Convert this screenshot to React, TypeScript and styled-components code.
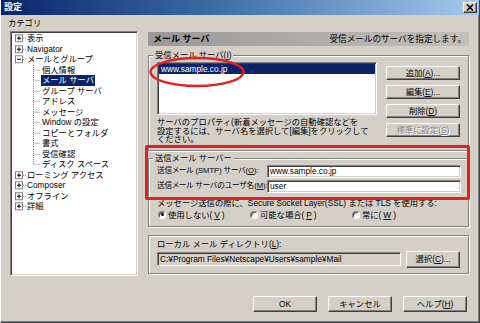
import React from 'react';
import styled, { createGlobalStyle } from 'styled-components';

const GlobalStyle = createGlobalStyle`
  html, body { margin: 0; padding: 0; background: #d4d0c8; }
  body {
    font-family: "Liberation Sans", "Noto Sans CJK JP", sans-serif;
    font-size: 8.3px;
    color: #000;
  }
  button { font-family: inherit; }
`;

const Window = styled.div`
  position: relative;
  box-sizing: border-box;
  width: 480px;
  height: 323px;
  background: #d4d0c8;
  border-left: 1px solid #fff;
  border-right: 1px solid #404040;
  border-bottom: 1px solid #404040;
  box-shadow: inset -1px -1px 0 #808080;
  display: flex;
  flex-direction: column;
  overflow: hidden;
`;

const TitleBar = styled.div`
  height: 15px;
  margin: 0 -1px;
  padding: 0 3px 0 4px;
  display: flex;
  align-items: center;
  justify-content: space-between;
  background: linear-gradient(90deg, #0a246a 0%, #3a6ea5 45%, #a6caf0 100%);
  color: #fff;
  font-weight: bold;
  font-size: 9px;
  line-height: 15px;
`;

const CloseButton = styled.div`
  width: 14px;
  height: 11px;
  box-sizing: border-box;
  background: #d4d0c8;
  border: 1px solid;
  border-color: #fff #404040 #404040 #fff;
  box-shadow: inset -1px -1px 0 #808080;
  display: flex;
  align-items: center;
  justify-content: center;
`;

const Main = styled.div`
  display: flex;
  padding-left: 9px;
`;

const LeftColumn = styled.div`
  width: 128px;
  padding-top: 2px;
  display: flex;
  flex-direction: column;
`;

const CategoryLabel = styled.div`
  margin-left: -2px;
  line-height: 12px;
  height: 12px;
`;

const Tree = styled.div`
  margin-top: 2px;
  height: 245px;
  box-sizing: border-box;
  padding: 1px 0 0 1px;
  background: #fff;
  border: 1px solid;
  border-color: #808080 #fff #fff #808080;
  box-shadow: inset 1px 1px 0 #404040, inset -1px -1px 0 #d4d0c8;
`;

const TreeRow = styled.div`
  display: flex;
  height: 10.5px;
  line-height: 10.5px;
  white-space: nowrap;
`;

const TreeLabel = styled.span<{ $selected?: boolean; $child?: boolean }>`
  padding: 0 1px;
  margin-left: ${p => (p.$child ? 1 : 0)}px;
  background: ${p => (p.$selected ? '#0a246a' : 'transparent')};
  color: ${p => (p.$selected ? '#fff' : '#000')};
`;

const RightColumn = styled.div`
  width: 321px;
  margin-left: 10px;
  padding-top: 17px;
  display: flex;
  flex-direction: column;
`;

const PanelHeader = styled.div`
  height: 14px;
  padding: 0 3px 0 5px;
  display: flex;
  align-items: center;
  justify-content: space-between;
  background: linear-gradient(90deg, #989898, #c4c0bc);
  line-height: 14px;
  white-space: nowrap;
`;

const HeaderTitle = styled.span`
  font-weight: bold;
  font-size: 9px;
`;

const HeaderHint = styled.span`
  font-size: 8.6px;
`;

const GroupBox = styled.div<{ $gap: number }>`
  position: relative;
  margin-top: ${p => p.$gap}px;
  border: 1px solid #808080;
  box-shadow: inset 1px 1px 0 #fff, 1px 1px 0 #fff;
  padding: 6px 8px 6px 8px;
`;

const Legend = styled.span`
  position: absolute;
  top: -6px;
  left: 4px;
  padding: 0 2px;
  background: #d4d0c8;
  line-height: 10px;
  white-space: nowrap;
`;

const ServerGrid = styled.div`
  display: grid;
  grid-template-columns: 220px 74px;
  column-gap: 9px;
`;

const ListBox = styled.div`
  height: 53px;
  box-sizing: border-box;
  padding: 1px;
  background: #fff;
  border: 1px solid;
  border-color: #808080 #fff #fff #808080;
  box-shadow: inset 1px 1px 0 #404040, inset -1px -1px 0 #d4d0c8;
`;

const ListItem = styled.div<{ $selected?: boolean }>`
  height: 10px;
  line-height: 10px;
  padding-left: 2px;
  background: ${p => (p.$selected ? '#0a246a' : 'transparent')};
  color: ${p => (p.$selected ? '#fff' : '#000')};
`;

const Description = styled.div`
  margin-top: 3px;
  line-height: 8.5px;
  white-space: nowrap;
`;

const ButtonStack = styled.div`
  padding-top: 4px;
  display: flex;
  flex-direction: column;
  gap: 5px;
`;

const Button = styled.button<{ $w?: number; $h?: number; $disabled?: boolean }>`
  width: ${p => (p.$w ? `${p.$w}px` : '100%')};
  height: ${p => p.$h ?? 14}px;
  box-sizing: border-box;
  margin: 0;
  padding: 0;
  font-size: 8.3px;
  line-height: 10px;
  background: #d4d0c8;
  color: ${p => (p.$disabled ? '#808080' : '#000')};
  text-shadow: ${p => (p.$disabled ? '1px 1px 0 #fff' : 'none')};
  border: 1px solid;
  border-color: #fff #404040 #404040 #fff;
  box-shadow: inset -1px -1px 0 #808080;
  display: flex;
  align-items: center;
  justify-content: center;
  white-space: nowrap;
`;

const SmtpGrid = styled.div`
  display: grid;
  grid-template-columns: 110px 194px;
  grid-auto-rows: 13px;
  row-gap: 2px;
  align-items: center;
`;

const FieldLabel = styled.span`
  line-height: 10px;
  font-size: 7.6px;
  white-space: nowrap;
  font-feature-settings: "palt";
`;

const TextField = styled.div<{ $gray?: boolean; $w?: number }>`
  width: ${p => (p.$w ? `${p.$w}px` : 'auto')};
  height: ${p => (p.$gray ? 14 : 13)}px;
  box-sizing: border-box;
  padding-left: 2px;
  background: ${p => (p.$gray ? '#d4d0c8' : '#fff')};
  border: 1px solid;
  border-color: #808080 #fff #fff #808080;
  box-shadow: inset 1px 1px 0 #404040, inset -1px -1px 0 #d4d0c8;
  display: flex;
  align-items: center;
  line-height: 10px;
  white-space: nowrap;
  overflow: hidden;
`;

const SslText = styled.div`
  margin-top: 6px;
  line-height: 9px;
  white-space: nowrap;
`;

const RadioRow = styled.div`
  margin-top: 2px;
  margin-left: 1px;
  display: flex;
  height: 10px;
  line-height: 10px;
`;

const RadioItem = styled.label<{ $w?: number }>`
  width: ${p => (p.$w ? `${p.$w}px` : 'auto')};
  display: flex;
  align-items: center;
  gap: 2px;
  white-space: nowrap;
`;

const RadioCircle = styled.span<{ $checked?: boolean }>`
  width: 8px;
  height: 8px;
  box-sizing: border-box;
  border-radius: 50%;
  background: #fff;
  border: 1px solid;
  border-color: #808080 #fff #fff #808080;
  box-shadow: inset 1px 1px 0 #404040;
  display: flex;
  align-items: center;
  justify-content: center;
  &::after {
    content: '';
    width: 3px;
    height: 3px;
    border-radius: 50%;
    background: ${p => (p.$checked ? '#000' : 'transparent')};
  }
`;

const LocalBox = styled(GroupBox)`
  padding: 4px 8px 5px 8px;
`;

const LocalLabel = styled.div`
  line-height: 9px;
`;

const LocalRow = styled.div`
  margin-top: 2px;
  height: 17px;
  display: flex;
  align-items: center;
  gap: 5px;
`;

const Footer = styled.div`
  margin-top: 20px;
  padding-right: 12px;
  display: flex;
  justify-content: flex-end;
  gap: 11px;
`;

const RedEllipse = styled.svg`
  position: absolute;
  left: 147px;
  top: 56px;
  pointer-events: none;
`;

const RedFrame = styled.div`
  position: absolute;
  left: 144px;
  top: 145px;
  width: 325px;
  height: 55px;
  box-sizing: border-box;
  border: 3px solid #e3211e;
  border-radius: 2px;
  pointer-events: none;
`;

type Item = { label: string; level: 0 | 1; box?: '+' | '-'; selected?: boolean; last?: boolean };

const treeItems: Item[] = [
  { label: '表示', level: 0, box: '+' },
  { label: 'Navigator', level: 0, box: '+' },
  { label: 'メールとグループ', level: 0, box: '-' },
  { label: '個人情報', level: 1 },
  { label: 'メール サーバ', level: 1, selected: true },
  { label: 'グループ サーバ', level: 1 },
  { label: 'アドレス', level: 1 },
  { label: 'メッセージ', level: 1 },
  { label: 'Window の設定', level: 1 },
  { label: 'コピーとフォルダ', level: 1 },
  { label: '書式', level: 1 },
  { label: '受信確認', level: 1 },
  { label: 'ディスク スペース', level: 1, last: true },
  { label: 'ローミング アクセス', level: 0, box: '+' },
  { label: 'Composer', level: 0, box: '+' },
  { label: 'オフライン', level: 0, box: '+' },
  { label: '詳細', level: 0, box: '+' },
];

function Expander({ kind }: { kind?: '+' | '-' }) {
  return (
    <svg width="14" height="10.5" viewBox="0 0 14 10.5">
      {kind && (
        <>
          <rect x="3.5" y="1.75" width="7" height="7" fill="#fff" stroke="#808080" strokeWidth="1" />
          <line x1="5" y1="5.25" x2="9" y2="5.25" stroke="#000" strokeWidth="1" />
          {kind === '+' && <line x1="7" y1="3.25" x2="7" y2="7.25" stroke="#000" strokeWidth="1" />}
          <line x1="11" y1="5.25" x2="14" y2="5.25" stroke="#808080" strokeWidth="1" strokeDasharray="1 1" />
        </>
      )}
    </svg>
  );
}

function Connector({ last }: { last?: boolean }) {
  return (
    <svg width="14" height="10.5" viewBox="0 0 14 10.5">
      <line x1="7.5" y1="0" x2="7.5" y2={last ? 5.25 : 10.5} stroke="#808080" strokeWidth="1" strokeDasharray="1 1" />
      <line x1="7.5" y1="5.25" x2="14" y2="5.25" stroke="#808080" strokeWidth="1" strokeDasharray="1 1" />
    </svg>
  );
}

export default function App() {
  return (
    <>
      <GlobalStyle />
      <Window>
        <TitleBar>
          <span>設定</span>
          <CloseButton>
            <svg width="8" height="7" viewBox="0 0 8 7">
              <path d="M1 0.5 L7 6.5 M7 0.5 L1 6.5" stroke="#000" strokeWidth="1.5" />
            </svg>
          </CloseButton>
        </TitleBar>

        <Main>
          <LeftColumn>
            <CategoryLabel>カテゴリ</CategoryLabel>
            <Tree>
              {treeItems.map(item => (
                <TreeRow key={item.label}>
                  <Expander kind={item.box} />
                  {item.level === 1 && <Connector last={item.last} />}
                  <TreeLabel $selected={item.selected} $child={item.level === 1}>
                    {item.label}
                  </TreeLabel>
                </TreeRow>
              ))}
            </Tree>
          </LeftColumn>

          <RightColumn>
            <PanelHeader>
              <HeaderTitle>メール サーバ</HeaderTitle>
              <HeaderHint>受信メールのサーバを指定します。</HeaderHint>
            </PanelHeader>

            <GroupBox $gap={9}>
              <Legend>受信メール サーバ(<u>I</u>)</Legend>
              <ServerGrid>
                <div>
                  <ListBox>
                    <ListItem $selected>www.sample.co.jp</ListItem>
                  </ListBox>
                  <Description>
                    サーバのプロパティ(新着メッセージの自動確認などを
                    <br />
                    設定するには、サーバ名を選択して[編集]をクリックして
                    <br />
                    ください。
                  </Description>
                </div>
                <ButtonStack>
                  <Button>追加(<u>A</u>)...</Button>
                  <Button>編集(<u>E</u>)...</Button>
                  <Button>削除(<u>D</u>)</Button>
                  <Button $disabled>標準に設定(<u>S</u>)</Button>
                </ButtonStack>
              </ServerGrid>
            </GroupBox>

            <GroupBox $gap={7}>
              <Legend>送信メール サーバー</Legend>
              <SmtpGrid>
                <FieldLabel>送信メール (SMTP) サーバ(<u>O</u>):</FieldLabel>
                <TextField>www.sample.co.jp</TextField>
                <FieldLabel>送信メール サーバのユーザ名(<u>M</u>):</FieldLabel>
                <TextField>user</TextField>
              </SmtpGrid>
              <SslText>メッセージ送信の際に、Secure Socket Layer(SSL) または TLS を使用する:</SslText>
              <RadioRow>
                <RadioItem $w={92}>
                  <RadioCircle $checked />
                  使用しない(<u>V</u>)
                </RadioItem>
                <RadioItem $w={102}>
                  <RadioCircle />
                  可能な場合(<u>P</u>)
                </RadioItem>
                <RadioItem>
                  <RadioCircle />
                  常に(<u>W</u>)
                </RadioItem>
              </RadioRow>
            </GroupBox>

            <LocalBox $gap={8}>
              <LocalLabel>ローカル メール ディレクトリ(<u>L</u>):</LocalLabel>
              <LocalRow>
                <TextField $gray $w={245}>C:¥Program Files¥Netscape¥Users¥sample¥Mail</TextField>
                <Button $w={54} $h={17}>選択(<u>C</u>)...</Button>
              </LocalRow>
            </LocalBox>
          </RightColumn>
        </Main>

        <Footer>
          <Button $w={64} $h={16}>OK</Button>
          <Button $w={64} $h={16}>キャンセル</Button>
          <Button $w={64} $h={16}>ヘルプ(<u>H</u>)</Button>
        </Footer>

        <RedEllipse width="98" height="32" viewBox="0 0 98 32">
          <ellipse cx="49" cy="16" rx="46.5" ry="14" fill="none" stroke="#e3211e" strokeWidth="2.5" />
        </RedEllipse>
        <RedFrame />
      </Window>
    </>
  );
}
